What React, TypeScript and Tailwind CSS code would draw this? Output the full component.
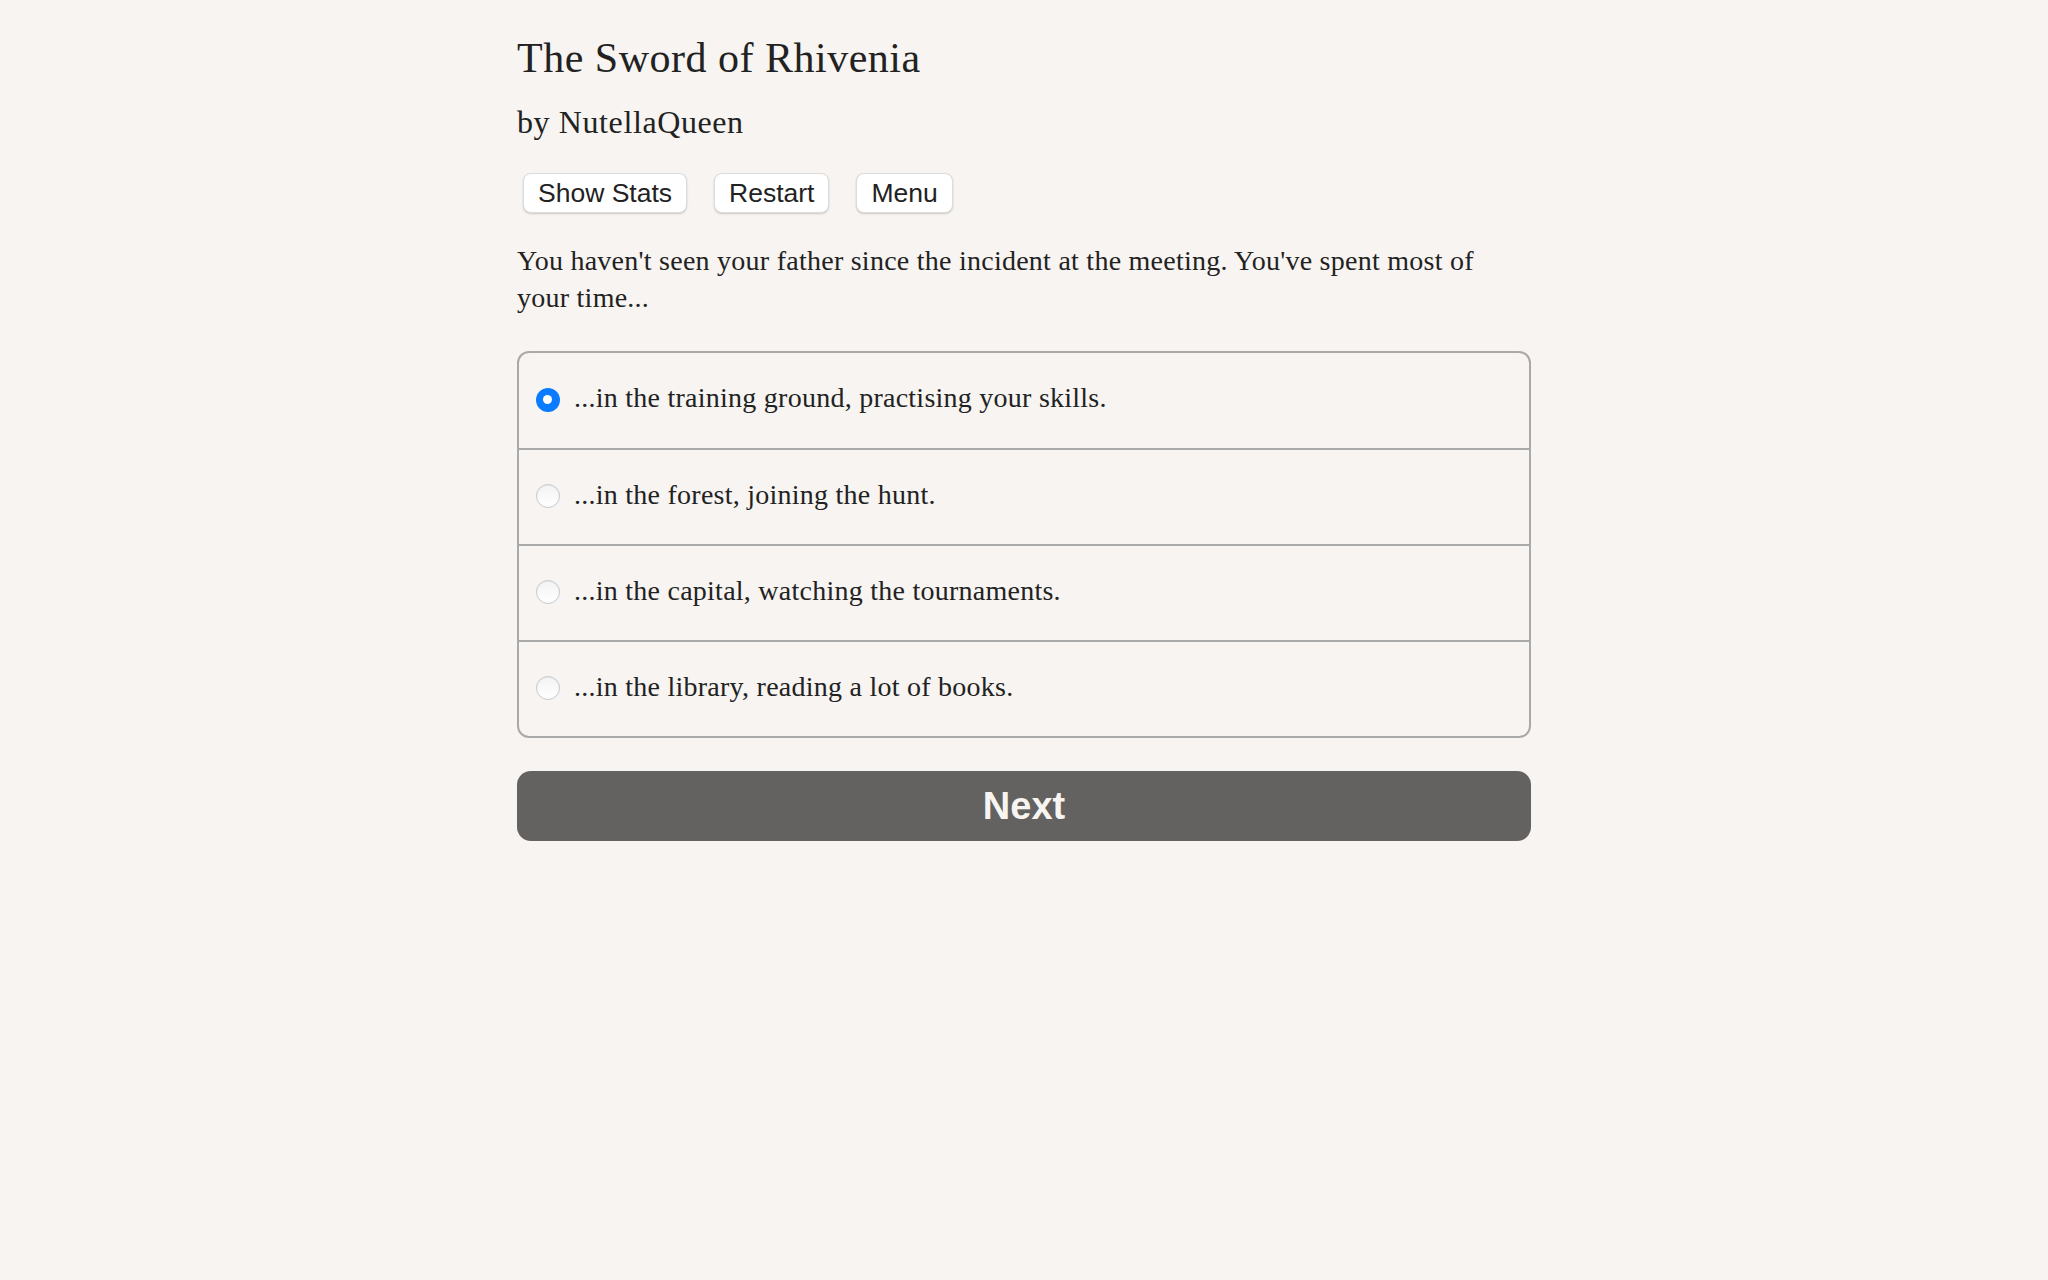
import React, { useState } from "react";

const serif = { fontFamily: '"Liberation Serif", "Times New Roman", serif' };

const options = [
  "...in the training ground, practising your skills.",
  "...in the forest, joining the hunt.",
  "...in the capital, watching the tournaments.",
  "...in the library, reading a lot of books.",
];

function Radio({ checked }: { checked: boolean }) {
  if (checked) {
    return (
      <span className="flex h-[24px] w-[24px] shrink-0 items-center justify-center rounded-full bg-[#0b7cff]">
        <span className="h-[9px] w-[9px] rounded-full bg-white" />
      </span>
    );
  }
  return (
    <span className="h-[24px] w-[24px] shrink-0 rounded-full border border-[#c9c9c9] bg-gradient-to-b from-[#f4f4f4] to-white shadow-[inset_0_1px_1px_rgba(0,0,0,0.06)]" />
  );
}

export default function App() {
  const [sel, setSel] = useState(0);
  return (
    <div className="min-h-screen w-full bg-[#f7f4f1] text-[#222]">
      <div className="mx-auto flex w-[1014px] flex-col pt-[33px]">
        <h1 className="text-[42px] leading-[50px] tracking-[0.5px] font-normal" style={serif}>
          The Sword of Rhivenia
        </h1>
        <h2 className="mt-[19px] text-[32px] leading-[40px] tracking-[0.6px] font-normal" style={serif}>
          by NutellaQueen
        </h2>
        <div
          className="mt-[31px] ml-[6px] flex gap-[27px] text-[26.5px] text-[#222]"
          style={{ fontFamily: '"Liberation Sans", Arial, sans-serif' }}
        >
          {["Show Stats", "Restart", "Menu"].map((b) => (
            <button
              key={b}
              className="h-[40px] rounded-[8px] border border-[#dcdcdc] bg-white px-[14px] leading-[38px] shadow-[0_1px_2px_rgba(0,0,0,0.18)]"
            >
              {b}
            </button>
          ))}
        </div>
        <p className="mt-[29px] text-[28px] leading-[37px] tracking-[0.25px]" style={serif}>
          You haven't seen your father since the incident at the meeting. You've spent most of your time...
        </p>
        <div className="mt-[35px] flex flex-col overflow-hidden rounded-[12px] border-2 border-[#a9a9a9]">
          {options.map((o, i) => (
            <label
              key={i}
              onClick={() => setSel(i)}
              className={
                "flex cursor-pointer items-center gap-[14.5px] pl-[16.5px] " +
                (i > 0 ? "h-[96px] border-t-2 border-[#a9a9a9]" : "h-[95px]")
              }
            >
              <span className="mb-[2px] flex">
                <Radio checked={sel === i} />
              </span>
              <span className="mb-[6px] text-[28px] leading-[37px] tracking-[0.25px]" style={serif}>
                {o}
              </span>
            </label>
          ))}
        </div>
        <button
          className="mt-[33px] h-[70px] w-full rounded-[14px] bg-[#636260] text-[38px] font-bold text-[#f7f4f1]"
          style={{ fontFamily: '"Liberation Sans", Arial, sans-serif' }}
        >
          Next
        </button>
      </div>
    </div>
  );
}
